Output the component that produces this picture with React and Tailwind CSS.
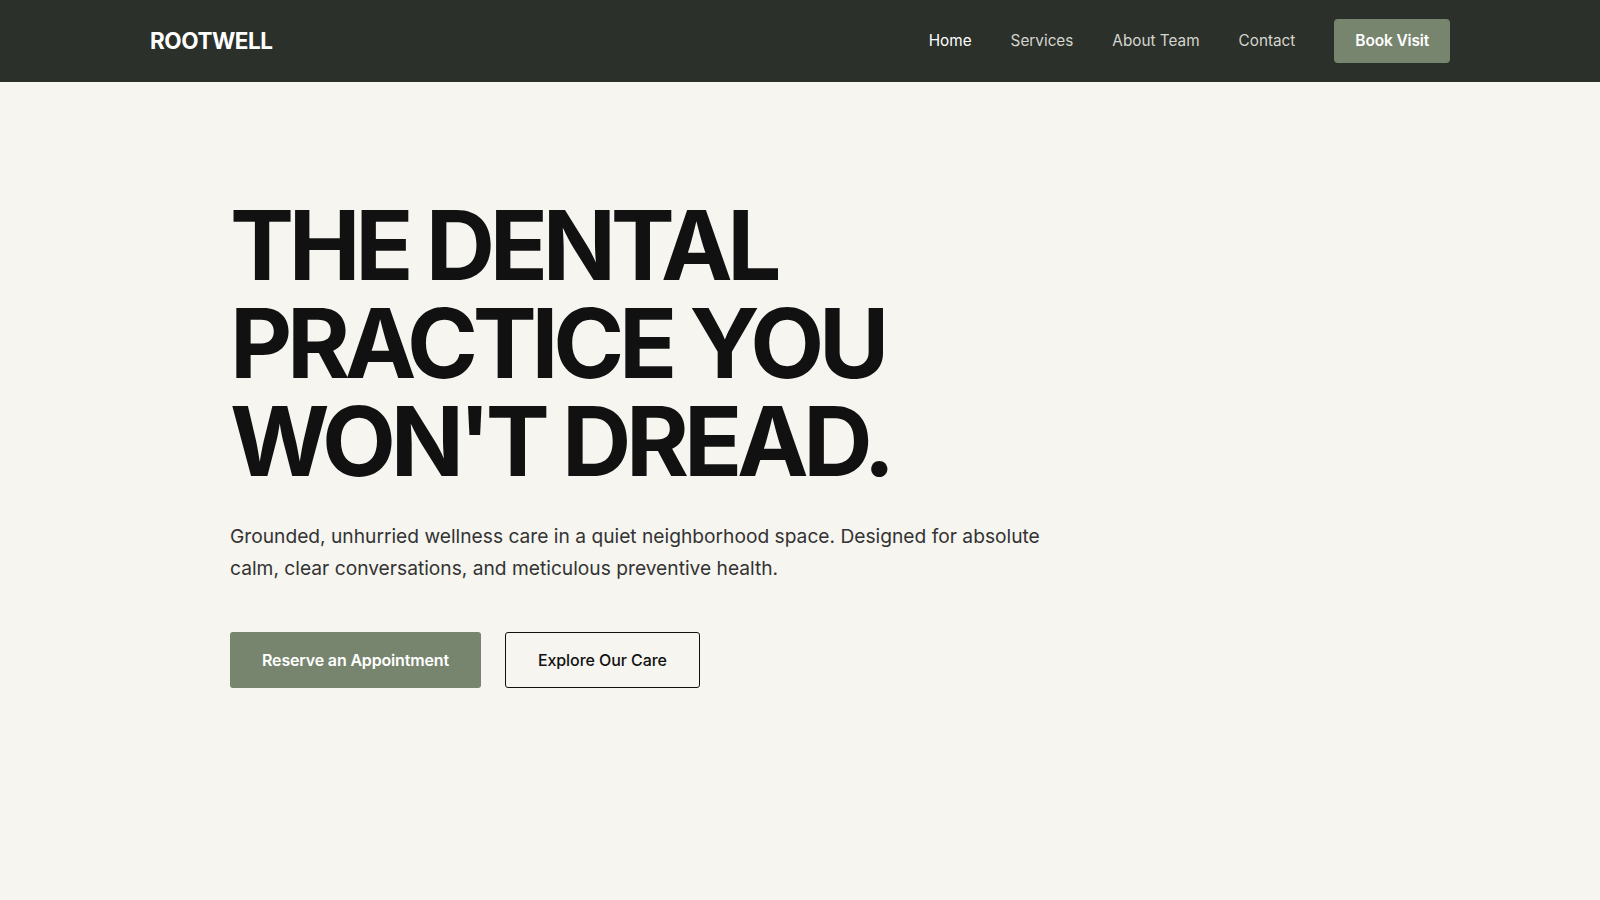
const links = ["Home", "Services", "About Team", "Contact"]

const App = () => {
    return (
        <div className="min-h-screen bg-[#f6f5f0] font-['Inter',sans-serif] text-[#111]">
            <header className="bg-[#2c302a]">
                <div className="mx-auto flex h-[82px] max-w-[1300px] items-center justify-between">
                    <a href="#" className="text-[22.5px] font-bold tracking-[-0.02em] text-white">
                        ROOTWELL
                    </a>
                    <nav className="flex items-center gap-[39px]">
                        {links.map((link, i) => (
                            <a
                                key={link}
                                href="#"
                                className={
                                    i === 0
                                        ? "text-[15.3px] text-white"
                                        : "text-[15.3px] text-[#d4d5cf]"
                                }
                            >
                                {link}
                            </a>
                        ))}
                        <a
                            href="#"
                            className="rounded-[4px] bg-[#77856e] px-[21px] py-[10px] text-[15.5px] font-semibold leading-6 tracking-[-0.01em] text-white"
                        >
                            Book Visit
                        </a>
                    </nav>
                </div>
            </header>

            <main className="mx-auto max-w-[1300px] px-20 pt-[114px]">
                <h1 className="text-[96px] font-bold uppercase leading-[98px] tracking-[-0.055em] text-[#111]">
                    The dental
                    <br />
                    practice you
                    <br />
                    won't dread.
                </h1>
                <p className="mt-[31px] max-w-[840px] text-[19.2px] leading-[31.5px] text-[#333]">
                    Grounded, unhurried wellness care in a quiet neighborhood space. Designed for
                    absolute calm, clear conversations, and meticulous preventive health.
                </p>
                <div className="mt-12 flex gap-6">
                    <a
                        href="#"
                        className="rounded-[3px] bg-[#77856e] px-8 py-4 text-[16px] font-semibold leading-6 tracking-[-0.01em] text-white"
                    >
                        Reserve an Appointment
                    </a>
                    <a
                        href="#"
                        className="rounded-[3px] border border-[#111] px-8 py-[15px] text-[16px] font-medium leading-6 tracking-[-0.005em] text-[#111]"
                    >
                        Explore Our Care
                    </a>
                </div>
            </main>
        </div>
    )
}

export default App
